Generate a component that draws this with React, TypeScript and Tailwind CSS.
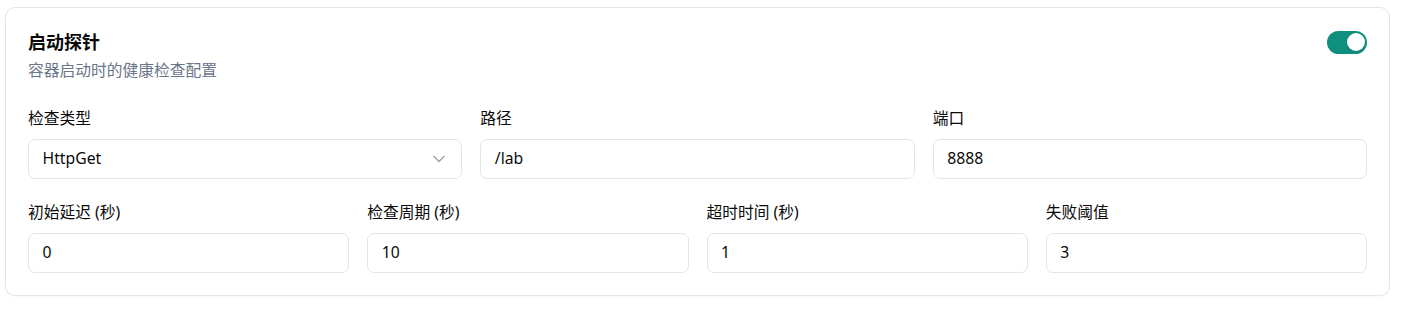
import { ChevronDown } from "lucide-react";

const font = {
  fontFamily: '"Noto Sans", "Noto Sans CJK SC", sans-serif',
};

function Field({ label, value, select }: { label: string; value: string; select?: boolean }) {
  return (
    <div className="flex flex-col">
      <label className="mb-[11px] h-[20px] text-[15.75px] leading-[20px] text-[#0a0a0a]">{label}</label>
      <div className="flex h-[40px] items-center justify-between rounded-[7px] border border-[#e2e5ee] bg-white pl-[13.5px] pr-[12px] text-[15.75px] text-[#0a0a0a]">
        <span>{value}</span>
        {select && <ChevronDown size={20} strokeWidth={1.6} className="text-[#9ca3af]" />}
      </div>
    </div>
  );
}

export default function App() {
  return (
    <div className="min-h-[320px] bg-white" style={font}>
      <div className="ml-[5px] mt-[7px] w-[1385px] rounded-[10px] border border-[#e2e5ee] bg-white p-[22px] shadow-[0_1px_2px_rgba(0,0,0,0.03)]">
        <div className="flex items-start justify-between">
          <div>
            <h2 className="text-[18px] font-bold leading-[24px] text-[#0a0a0a]">启动探针</h2>
            <p className="mt-[6px] text-[15.75px] leading-[20px] text-[#6b7689]">容器启动时的健康检查配置</p>
          </div>
          <button className="mt-[1px] flex h-[22.5px] w-[40.5px] items-center rounded-full bg-[#0f8f7e] px-[2px]">
            <span className="ml-auto block h-[18px] w-[18px] rounded-full bg-white shadow-sm" />
          </button>
        </div>

        <div className="mt-[28px] grid grid-cols-3 gap-[18px]">
          <Field label="检查类型" value="HttpGet" select />
          <Field label="路径" value="/lab" />
          <Field label="端口" value="8888" />
        </div>

        <div className="mt-[23px] grid grid-cols-4 gap-[18px]">
          <Field label="初始延迟 (秒)" value="0" />
          <Field label="检查周期 (秒)" value="10" />
          <Field label="超时时间 (秒)" value="1" />
          <Field label="失败阈值" value="3" />
        </div>
      </div>
    </div>
  );
}
